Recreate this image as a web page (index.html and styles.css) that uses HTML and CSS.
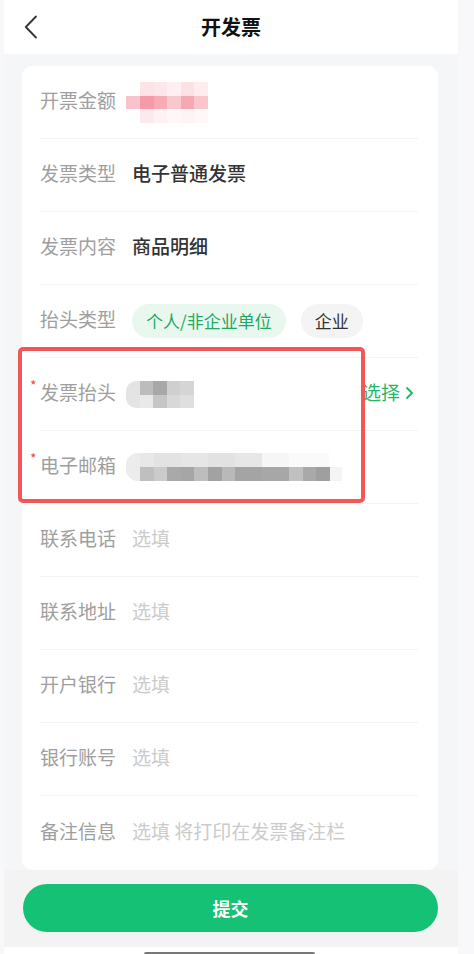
FILE: index.html
```html
<!DOCTYPE html>
<html lang="zh-CN">
<head>
    <meta charset="UTF-8">
    <meta name="viewport" content="width=device-width, initial-scale=1.0">
    <title>开发票</title>
    <link rel="stylesheet" href="styles.css">
</head>
<body>
    <div class="app">
        <header class="nav-bar">
            <a class="nav-back" href="#">
                <svg width="14" height="24" viewBox="0 0 14 24"><path d="M12 1.5 L1.8 12 L12 22.5" fill="none" stroke="#333" stroke-width="1.8" stroke-linecap="round" stroke-linejoin="round"/></svg>
            </a>
            <h1 class="nav-title">开发票</h1>
            <span></span>
        </header>

        <form class="invoice-card">
            <div class="form-row">
                <span class="form-label">开票金额</span>
                <svg class="mosaic" width="82" height="41" viewBox="0 0 82 41">
                    <rect x="0" y="14" width="14" height="13" fill="#f8c3ca"/>
                    <rect x="14" y="0" width="14" height="14" fill="#fde3e6"/>
                    <rect x="28" y="0" width="13" height="14" fill="#fde7ea"/>
                    <rect x="41" y="0" width="14" height="14" fill="#fef0f2"/>
                    <rect x="55" y="0" width="13" height="14" fill="#fde1e5"/>
                    <rect x="68" y="0" width="14" height="14" fill="#feecef"/>
                    <rect x="14" y="14" width="14" height="13" fill="#f59ba7"/>
                    <rect x="28" y="14" width="13" height="13" fill="#f6abb5"/>
                    <rect x="41" y="14" width="14" height="13" fill="#f9c8ce"/>
                    <rect x="55" y="14" width="13" height="13" fill="#f6a9b3"/>
                    <rect x="68" y="14" width="14" height="13" fill="#f9c6cd"/>
                    <rect x="14" y="27" width="14" height="14" fill="#fde9ec"/>
                    <rect x="28" y="27" width="13" height="14" fill="#fdf1f3"/>
                    <rect x="41" y="27" width="14" height="14" fill="#fef6f7"/>
                    <rect x="55" y="27" width="13" height="14" fill="#fef3f5"/>
                    <rect x="68" y="27" width="14" height="14" fill="#fef8f9"/>
                </svg>
            </div>
            <div class="form-row">
                <span class="form-label">发票类型</span>
                <span class="form-value">电子普通发票</span>
            </div>
            <div class="form-row">
                <span class="form-label">发票内容</span>
                <span class="form-value">商品明细</span>
            </div>
            <div class="form-row">
                <span class="form-label">抬头类型</span>
                <div class="chip-group">
                    <span class="chip chip-active">个人/非企业单位</span>
                    <span class="chip">企业</span>
                </div>
            </div>
            <div class="form-row">
                <span class="form-label required">发票抬头</span>
                <svg class="mosaic" width="68" height="27" viewBox="0 0 68 27">
                    <path d="M10 0 H14 V27 H10 A10 10 0 0 1 0 17 V10 A10 10 0 0 1 10 0 Z" fill="#e4e4e4"/>
                    <rect x="14" y="0" width="13" height="14" fill="#bcbcbc"/>
                    <rect x="27" y="0" width="14" height="14" fill="#a8a8a8"/>
                    <rect x="41" y="0" width="13" height="14" fill="#cfcfcf"/>
                    <rect x="54" y="0" width="14" height="14" fill="#d5d5d5"/>
                    <rect x="14" y="14" width="13" height="13" fill="#e9e9e9"/>
                    <rect x="27" y="14" width="14" height="13" fill="#c6c6c6"/>
                    <rect x="41" y="14" width="13" height="13" fill="#d8d8d8"/>
                    <rect x="54" y="14" width="14" height="13" fill="#dfdfdf"/>
                </svg>
                <a class="pick-link" href="#">选择
                    <svg width="9" height="14" viewBox="0 0 9 14"><path d="M2 2 L7 7 L2 12" fill="none" stroke="#1fb866" stroke-width="1.8" stroke-linecap="round" stroke-linejoin="round"/></svg>
                </a>
            </div>
            <div class="form-row">
                <span class="form-label required">电子邮箱</span>
                <svg class="mosaic" width="216" height="28" viewBox="0 0 216 28">
                    <path d="M12 0 H14 V28 H12 A12 12 0 0 1 0 16 V12 A12 12 0 0 1 12 0 Z" fill="#ececec"/>
                    <rect x="14" y="0" width="14" height="14" fill="#e8e8e8"/>
                    <rect x="28" y="0" width="27" height="14" fill="#e3e3e3"/>
                    <rect x="55" y="0" width="27" height="14" fill="#e6e6e6"/>
                    <rect x="82" y="0" width="27" height="14" fill="#e2e2e2"/>
                    <rect x="109" y="0" width="27" height="14" fill="#e7e7e7"/>
                    <rect x="136" y="0" width="27" height="14" fill="#f6f6f6"/>
                    <rect x="163" y="0" width="40" height="14" fill="#fafafa"/>
                    <rect x="14" y="14" width="14" height="14" fill="#bfbfbf"/>
                    <rect x="28" y="14" width="13" height="14" fill="#cbcbcb"/>
                    <rect x="41" y="14" width="14" height="14" fill="#a9a9a9"/>
                    <rect x="55" y="14" width="13" height="14" fill="#a6a6a6"/>
                    <rect x="68" y="14" width="14" height="14" fill="#bdbdbd"/>
                    <rect x="82" y="14" width="14" height="14" fill="#a2a2a2"/>
                    <rect x="96" y="14" width="13" height="14" fill="#b9b9b9"/>
                    <rect x="109" y="14" width="27" height="14" fill="#a4a4a4"/>
                    <rect x="136" y="14" width="27" height="14" fill="#a7a7a7"/>
                    <rect x="163" y="14" width="14" height="14" fill="#c0c0c0"/>
                    <rect x="177" y="14" width="13" height="14" fill="#a9a9a9"/>
                    <rect x="190" y="14" width="14" height="14" fill="#9f9f9f"/>
                    <rect x="204" y="14" width="12" height="14" fill="#f4f4f4"/>
                </svg>
            </div>
            <div class="form-row">
                <span class="form-label">联系电话</span>
                <span class="form-placeholder">选填</span>
            </div>
            <div class="form-row">
                <span class="form-label">联系地址</span>
                <span class="form-placeholder">选填</span>
            </div>
            <div class="form-row">
                <span class="form-label">开户银行</span>
                <span class="form-placeholder">选填</span>
            </div>
            <div class="form-row">
                <span class="form-label">银行账号</span>
                <span class="form-placeholder">选填</span>
            </div>
            <div class="form-row">
                <span class="form-label">备注信息</span>
                <span class="form-placeholder">选填 将打印在发票备注栏</span>
            </div>
        </form>

        <div class="submit-bar">
            <button class="submit-btn" type="button">提交</button>
        </div>
        <div class="home-strip">
            <span class="home-indicator"></span>
        </div>

        <div class="highlight-box"></div>
    </div>
</body>
</html>
```

FILE: styles.css
```css
body {
    margin: 0;
    padding: 0;
    background-color: #f8f8fa;
    font-family: "Noto Sans CJK SC", "Noto Sans", sans-serif;
    color: #333;
}
.app {
    position: relative;
    width: 454px;
    margin-left: 4px;
    height: 954px;
    background-color: #f5f6f8;
    display: flex;
    flex-direction: column;
}
.nav-bar {
    height: 54px;
    background: #fff;
    display: grid;
    grid-template-columns: 60px 1fr 60px;
    align-items: center;
    flex-shrink: 0;
}
.nav-back {
    display: flex;
    padding-left: 20px;
}
.nav-title {
    margin: 0;
    padding-bottom: 2px;
    text-align: center;
    font-size: 20px;
    font-weight: 700;
    color: #111;
}
.invoice-card {
    margin: 12px 20px 0 18px;
    background: #fff;
    border-radius: 10px;
    padding: 0 20px 1px 18px;
    flex-shrink: 0;
}
.form-row {
    height: 73px;
    box-sizing: border-box;
    display: flex;
    align-items: center;
    gap: 16px;
    border-bottom: 1px solid #f3f3f3;
}
.form-row:last-child {
    border-bottom: none;
}
.form-label {
    position: relative;
    width: 76px;
    flex-shrink: 0;
    padding-bottom: 5px;
    font-size: 19px;
    color: #9e9e9e;
    white-space: nowrap;
}
.form-label.required::before {
    content: "*";
    position: absolute;
    left: -10px;
    top: -3px;
    font-size: 14px;
    color: #ea4b4b;
}
.form-value {
    padding-bottom: 5px;
    font-size: 19px;
    font-weight: 500;
    color: #333;
}
.form-placeholder {
    padding-bottom: 5px;
    font-size: 19px;
    color: #cbcbcb;
    white-space: nowrap;
}
.mosaic {
    display: block;
    margin-left: -6px;
}
.chip-group {
    display: flex;
    gap: 15px;
}
.chip {
    height: 34px;
    line-height: 33px;
    padding: 0 14px;
    border-radius: 17px;
    font-size: 17px;
    background: #f4f4f4;
    color: #333;
}
.chip-active {
    background: #e9f8ef;
    color: #1fa862;
}
.pick-link {
    margin-left: auto;
    margin-right: 4px;
    padding-bottom: 5px;
    display: flex;
    align-items: center;
    gap: 5px;
    font-size: 19px;
    color: #1fb866;
    text-decoration: none;
}
.pick-link svg {
    margin-top: 3px;
}
.submit-bar {
    flex: 1;
    background: #f3f3f3;
    padding: 14px 20px 0 19px;
}
.submit-btn {
    width: 100%;
    height: 48px;
    border: none;
    border-radius: 24px;
    background-color: #15c175;
    color: #fff;
    font-family: inherit;
    font-size: 18px;
    font-weight: 700;
    cursor: pointer;
}
.home-strip {
    height: 7px;
    background: #fff;
    display: flex;
    justify-content: center;
    align-items: flex-end;
}
.home-indicator {
    width: 171px;
    height: 2px;
    margin-left: -4px;
    background: #777;
    border-radius: 2px 2px 0 0;
}
.highlight-box {
    position: absolute;
    left: 14px;
    top: 347px;
    width: 339px;
    height: 148px;
    border: 4px solid #f35656;
    border-radius: 5px;
    pointer-events: none;
}
```
